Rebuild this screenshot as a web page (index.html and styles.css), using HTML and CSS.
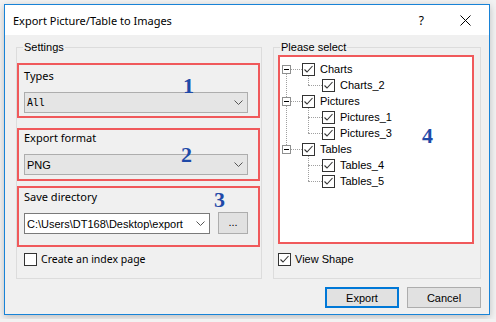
FILE: index.html
```html
<!DOCTYPE html>
<html lang="en">
<head>
    <meta charset="UTF-8">
    <title>Export Picture/Table to Images</title>
    <link rel="stylesheet" href="styles.css">
</head>
<body>

<div class="window">
    <div class="titlebar">
        <span class="title">Export Picture/Table to Images</span>
        <span class="help">?</span>
        <span class="close">
            <svg width="11" height="11" viewBox="0 0 11 11"><path d="M0.5 0.5 L10.5 10.5 M10.5 0.5 L0.5 10.5" stroke="#000" stroke-width="1" fill="none"/></svg>
        </span>
    </div>

    <div class="content">
        <div class="groups">
            <fieldset class="group settings">
                <legend>Settings</legend>

                <div class="field field-types">
                    <div class="label">Types</div>
                    <div class="select">
                        <span class="mono">All</span>
                        <svg class="chevron" width="9" height="5" viewBox="0 0 9 5"><polyline points="0.5,0.5 4.5,4.5 8.5,0.5" stroke="#555" fill="none"/></svg>
                    </div>
                    <span class="mark mark-1">1</span>
                </div>

                <div class="field field-format">
                    <div class="label">Export format</div>
                    <div class="select">
                        <span>PNG</span>
                        <svg class="chevron" width="9" height="5" viewBox="0 0 9 5"><polyline points="0.5,0.5 4.5,4.5 8.5,0.5" stroke="#555" fill="none"/></svg>
                    </div>
                    <span class="mark mark-2">2</span>
                </div>

                <div class="field field-dir">
                    <div class="label">Save directory</div>
                    <div class="dir-row">
                        <div class="combo">
                            <span>C:\Users\DT168\Desktop\export</span>
                            <svg class="chevron" width="9" height="5" viewBox="0 0 9 5"><polyline points="0.5,0.5 4.5,4.5 8.5,0.5" stroke="#555" fill="none"/></svg>
                        </div>
                        <button class="browse">...</button>
                    </div>
                    <span class="mark mark-3">3</span>
                </div>

                <label class="check-row index-row">
                    <span class="chk"></span>
                    <span>Create an index page</span>
                </label>
            </fieldset>

            <fieldset class="group pick">
                <legend>Please select</legend>

                <div class="treebox">
                    <ul class="tree">
                        <li class="root">
                            <div class="row"><span class="expander"></span><span class="branch"></span><span class="chk on"></span><span class="text">Charts</span></div>
                            <ul>
                                <li><div class="row"><span class="elbow"></span><span class="chk on"></span><span class="text">Charts_2</span></div></li>
                            </ul>
                        </li>
                        <li class="root">
                            <div class="row"><span class="expander"></span><span class="branch"></span><span class="chk on"></span><span class="text">Pictures</span></div>
                            <ul>
                                <li><div class="row"><span class="elbow"></span><span class="chk on"></span><span class="text">Pictures_1</span></div></li>
                                <li><div class="row"><span class="elbow"></span><span class="chk on"></span><span class="text">Pictures_3</span></div></li>
                            </ul>
                        </li>
                        <li class="root">
                            <div class="row"><span class="expander"></span><span class="branch"></span><span class="chk on"></span><span class="text">Tables</span></div>
                            <ul>
                                <li><div class="row"><span class="elbow"></span><span class="chk on"></span><span class="text">Tables_4</span></div></li>
                                <li><div class="row"><span class="elbow"></span><span class="chk on"></span><span class="text">Tables_5</span></div></li>
                            </ul>
                        </li>
                    </ul>
                    <span class="mark mark-4">4</span>
                </div>

                <label class="check-row view-row">
                    <span class="chk on"></span>
                    <span>View Shape</span>
                </label>
            </fieldset>
        </div>

        <div class="buttons">
            <button class="btn default">Export</button>
            <button class="btn">Cancel</button>
        </div>
    </div>
</div>

</body>
</html>
```

FILE: styles.css
```css
body {
    margin: 0;
    padding: 4px;
    background-color: #f2f2f2;
    font-family: "Liberation Sans", Arial, sans-serif;
    font-size: 11px;
    color: #000;
}
.window {
    width: 486px;
    height: 311px;
    box-sizing: border-box;
    border: 1px solid #1883d7;
    background-color: #f0f0f0;
    box-shadow: 0 2px 7px rgba(0, 0, 0, 0.22);
    display: flex;
    flex-direction: column;
}
.titlebar {
    height: 30px;
    background-color: #fff;
    display: flex;
    align-items: center;
    padding-left: 8px;
    flex: none;
}
.title {
    font-family: "Noto Sans", sans-serif;
    font-size: 11px;
}
.help {
    margin-left: auto;
    margin-right: 36px;
    font-family: "Noto Sans", sans-serif;
    font-size: 12px;
}
.close {
    display: flex;
    margin-right: 18px;
}
.content {
    padding: 4px 8px 6px 11px;
}
.groups {
    display: flex;
    gap: 11px;
}
.group {
    margin: 0;
    height: 240px;
    box-sizing: border-box;
    border: 1px solid #dcdcdc;
    min-width: 0;
}
.group legend {
    padding: 0 1px;
    line-height: 16px;
    font-size: 11px;
}
.settings {
    width: 246px;
    padding: 8px 1px 0 0;
}
.settings legend {
    margin-left: 6px;
}
.pick {
    width: 208px;
    padding: 0 6px 0 4px;
}
.pick legend {
    margin-left: 2px;
}

/* red annotation boxes */
.field {
    position: relative;
    border: 2px solid #f0595b;
    padding: 0 10px 0 5px;
}
.field-types {
    padding-top: 3px;
    padding-bottom: 3px;
}
.field-format {
    margin-top: 10px;
    padding-bottom: 4px;
}
.field-dir {
    margin-top: 5px;
    padding-top: 1px;
    padding-bottom: 11px;
}
.label {
    font-family: "Noto Sans", sans-serif;
    font-size: 11px;
    line-height: 16px;
    margin-bottom: 8px;
}
.field-dir .label {
    margin-bottom: 7px;
}
.select {
    height: 21px;
    box-sizing: border-box;
    border: 1px solid #adadad;
    background-color: #e5e5e5;
    display: flex;
    align-items: center;
    padding-left: 2px;
}
.mono {
    font-family: "DejaVu Sans Mono", monospace;
    font-size: 10px;
}
.chevron {
    margin-left: auto;
    margin-right: 4px;
}
.dir-row {
    display: flex;
    align-items: flex-end;
    gap: 8px;
}
.combo {
    width: 186px;
    height: 21px;
    box-sizing: border-box;
    border: 1px solid #7a7a7a;
    background-color: #fff;
    display: flex;
    align-items: center;
    padding-left: 2px;
}
.browse {
    width: 30px;
    height: 22px;
    padding: 0 0 3px;
    border: 1px solid #adadad;
    background-color: #e1e1e1;
    font-family: "Liberation Sans", Arial, sans-serif;
    font-size: 11px;
}
.mark {
    position: absolute;
    font-family: "Liberation Serif", "Times New Roman", serif;
    font-weight: bold;
    font-size: 22px;
    line-height: 22px;
    color: #1f4aa8;
}
.mark-1 { left: 164px; top: 10px; }
.mark-2 { left: 162px; top: 14px; }
.mark-3 { left: 195px; top: 1px; }
.mark-4 { left: 142px; top: 68px; }

/* checkboxes */
.check-row {
    display: flex;
    align-items: center;
    line-height: 13px;
}
.check-row .chk {
    margin-right: 4px;
}
.index-row {
    margin: 6px 0 0 7px;
    font-family: "Noto Sans", sans-serif;
    font-size: 10.5px;
}
.view-row {
    margin-top: 9px;
}
.chk {
    width: 13px;
    height: 13px;
    box-sizing: border-box;
    border: 1px solid #333;
    background-color: #fff;
    flex: none;
}
.chk.on {
    background: #fff url("data:image/svg+xml,%3Csvg xmlns='http://www.w3.org/2000/svg' width='11' height='11'%3E%3Cpolyline points='1.5,5.5 4,8 9.5,2' stroke='%23333' stroke-width='1.1' fill='none'/%3E%3C/svg%3E") no-repeat center;
}

/* tree view */
.treebox {
    position: relative;
    height: 189px;
    box-sizing: border-box;
    border: 2px solid #f0595b;
    background-color: #fff;
}
.tree,
.tree ul {
    list-style: none;
    margin: 0;
    padding: 0;
}
.tree {
    padding-top: 4px;
}
.tree li {
    position: relative;
}
.tree .root::before {
    content: '';
    position: absolute;
    left: 6px;
    top: 13px;
    bottom: -4px;
    border-left: 1px dotted #a0a0a0;
}
.tree .root:last-child::before {
    display: none;
}
.tree ul li::before {
    content: '';
    position: absolute;
    left: 28px;
    top: -1px;
    bottom: 0;
    border-left: 1px dotted #a0a0a0;
}
.tree ul li:last-child::before {
    bottom: auto;
    height: 9px;
}
.row {
    display: flex;
    align-items: center;
    height: 16px;
}
.expander {
    position: relative;
    z-index: 1;
    width: 9px;
    height: 9px;
    box-sizing: border-box;
    border: 1px solid #8e8f8f;
    background-color: #fff;
    margin-left: 2px;
    flex: none;
}
.expander::after {
    content: '';
    position: absolute;
    left: 1px;
    top: 3px;
    width: 5px;
    height: 1px;
    background-color: #000;
}
.branch {
    width: 11px;
    border-top: 1px dotted #a0a0a0;
}
.elbow {
    width: 14px;
    margin-left: 28px;
    border-top: 1px dotted #a0a0a0;
}
.text {
    margin-left: 5px;
}

.buttons {
    display: flex;
    justify-content: flex-end;
    gap: 8px;
    margin-top: 8px;
}
.btn {
    width: 74px;
    height: 21px;
    padding: 0;
    border: 1px solid #adadad;
    background-color: #e1e1e1;
    font-family: "Liberation Sans", Arial, sans-serif;
    font-size: 11px;
    color: #000;
}
.btn.default {
    border: 2px solid #0078d7;
}
```
